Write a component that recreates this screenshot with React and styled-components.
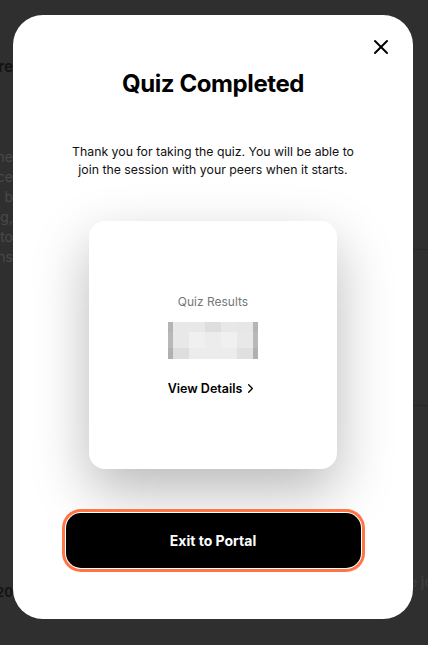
import styled, { createGlobalStyle } from "styled-components";
import { X, ChevronRight } from "lucide-react";

const GlobalStyle = createGlobalStyle`
  html, body {
    margin: 0;
    padding: 0;
    height: 100%;
    overflow: hidden;
  }
  body {
    font-family: Inter, "Noto Sans", sans-serif;
    background: #2f2f2f;
  }
  * {
    box-sizing: border-box;
  }
`;

const Page = styled.div`
  position: relative;
  width: 428px;
  height: 645px;
  background: #2f2f2f;
  overflow: hidden;
  display: flex;
  justify-content: space-between;
`;

// behind the modal, only the edges show
const BgLeft = styled.div`
  width: 13px;
  padding-top: 57px;
  display: flex;
  flex-direction: column;
  align-items: flex-end;
  white-space: nowrap;
`;

const BgHeading = styled.div`
  font-weight: 700;
  font-size: 15px;
  line-height: 20px;
  color: #141414;
  margin-bottom: 70px;
`;

const BgLine = styled.div`
  font-size: 14px;
  line-height: 20px;
  color: #4a4a4a;
`;

const BgFooter = styled.div`
  margin-top: auto;
  margin-bottom: 45px;
  font-weight: 700;
  font-size: 13px;
  color: #141414;
`;

const BgRight = styled.div`
  width: 19px;
  display: flex;
  flex-direction: column;
  white-space: nowrap;
`;

const BgRule = styled.div`
  height: 1px;
  background: #272727;
  margin-top: ${({ top }) => top}px;
`;

const BgRightText = styled.div`
  margin-top: 167px;
  font-size: 14px;
  font-weight: 600;
  color: #3c3c3c;
`;

const Modal = styled.div`
  position: absolute;
  left: 13px;
  top: 15px;
  width: 400px;
  height: 604px;
  background: #ffffff;
  border-radius: 30px;
  padding: 54px 0 0;
  display: flex;
  flex-direction: column;
  align-items: center;
`;

const CloseButton = styled.button`
  position: absolute;
  top: 20px;
  right: 20px;
  width: 24px;
  height: 24px;
  padding: 0;
  border: none;
  background: none;
  color: #000;
  cursor: pointer;
  display: flex;
`;

const Title = styled.h1`
  margin: 0;
  font-size: 24px;
  line-height: 30px;
  font-weight: 700;
  letter-spacing: -0.4px;
  color: #000;
`;

const Message = styled.p`
  margin: 44px 0 0;
  width: 284px;
  font-size: 12.3px;
  line-height: 18px;
  text-align: center;
  color: #111;
`;

const ResultCard = styled.div`
  margin-top: 42px;
  width: 248px;
  height: 248px;
  border-radius: 16px;
  background: #fff;
  box-shadow: 0 22px 55px rgba(0, 0, 0, 0.28);
  display: flex;
  flex-direction: column;
  align-items: center;
  justify-content: center;
`;

const CardLabel = styled.div`
  font-size: 12px;
  line-height: 16px;
  color: #777;
`;

const Blurred = styled.svg`
  display: block;
  margin-top: 12px;
`;

const DetailsLink = styled.button`
  margin-top: 22px;
  border: none;
  background: none;
  padding: 0;
  font-family: inherit;
  font-size: 12.5px;
  font-weight: 600;
  color: #000;
  display: flex;
  align-items: center;
  gap: 1px;
  cursor: pointer;
`;

const ExitButton = styled.button`
  margin-top: 44px;
  width: 295px;
  height: 55px;
  border: none;
  border-radius: 15px;
  background: #000;
  color: #fff;
  font-family: inherit;
  font-size: 14px;
  font-weight: 700;
  box-shadow: 0 0 0 1px #fff, 0 0 0 4px #ff7546;
  cursor: pointer;
`;

const cols = [5, 16, 16, 16, 16, 16, 5];
const rows = [10, 16, 11];
const shades = [
  ["#b4b4b4", "#e8e8e8", "#e8e8e8", "#dedede", "#e8e8e8", "#e6e6e6", "#b4b4b4"],
  ["#b8b8b8", "#e8e8e8", "#f0f0f0", "#ececec", "#f0f0f0", "#e8e8e8", "#b8b8b8"],
  ["#b0b0b0", "#dedede", "#ececec", "#ececec", "#ececec", "#e0e0e0", "#b0b0b0"],
];

const Mosaic = () => {
  const cells = [];
  let y = 0;
  rows.forEach((h, r) => {
    let x = 0;
    cols.forEach((w, c) => {
      cells.push(<rect key={`${r}-${c}`} x={x} y={y} width={w} height={h} fill={shades[r][c]} />);
      x += w;
    });
    y += h;
  });
  return (
    <Blurred width="90" height="37" viewBox="0 0 90 37">
      {cells}
    </Blurred>
  );
};

const App = () => {
  return (
    <>
      <GlobalStyle />
      <Page>
        <BgLeft>
          <BgHeading>Are you re</BgHeading>
          <BgLine>Every lesson is one</BgLine>
          <BgLine>together with peace</BgLine>
          <BgLine>Questions b</BgLine>
          <BgLine>with reading,</BgLine>
          <BgLine>you are ready to</BgLine>
          <BgLine>the next sessions</BgLine>
          <BgFooter>© 20</BgFooter>
        </BgLeft>
        <BgRight>
          <BgRule top={249} />
          <BgRule top={155} />
          <BgRightText>e join</BgRightText>
        </BgRight>

        <Modal>
          <CloseButton aria-label="Close">
            <X size={24} strokeWidth={2} />
          </CloseButton>
          <Title>Quiz Completed</Title>
          <Message>
            Thank you for taking the quiz. You will be able to join the session with your peers
            when it starts.
          </Message>
          <ResultCard>
            <CardLabel>Quiz Results</CardLabel>
            <Mosaic />
            <DetailsLink>
              View Details <ChevronRight size={15} strokeWidth={2} />
            </DetailsLink>
          </ResultCard>
          <ExitButton>Exit to Portal</ExitButton>
        </Modal>
      </Page>
    </>
  );
};

export default App;
